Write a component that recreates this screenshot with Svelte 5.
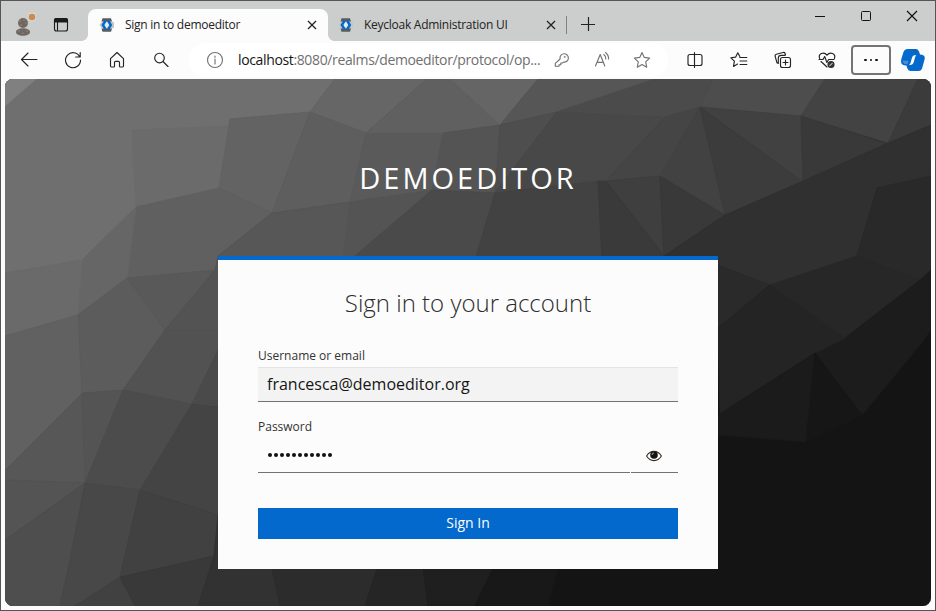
<script>
  const facets = [
    ['5,79 931,79 931,606 5,606', '#141414'],
    ['5,79 335,79 310,112 230,119 219,188 218,256 82,290 5,290', '#6f6f6f'],
    ['5,79 36,79 5,106', '#808080'],
    ['132,130 228,126 219,188 136,207', '#6b6b6b'],
    ['230,119 310,112 272,213 219,188', '#636363'],
    ['335,79 427,79 366,133 310,112', '#666666'],
    ['427,79 450,79 500,125 443,133 366,133', '#606060'],
    ['450,79 538,79 500,125', '#656565'],
    ['538,79 660,79 557,112 500,125', '#565656'],
    ['310,112 366,133 350,202 272,213', '#5e5e5e'],
    ['366,133 443,133 437,190 350,202', '#5a5a5a'],
    ['443,133 500,125 495,193 432,190', '#545454'],
    ['500,125 557,112 495,193', '#4e4e4e'],
    ['136,207 219,188 272,213 218,256 215,270 127,278', '#606060'],
    ['136,207 127,278 78,315 82,260', '#666666'],
    ['5,273 82,260 78,315 5,336', '#6a6a6a'],
    ['272,213 350,202 345,260 218,260 218,256', '#575757'],
    ['350,202 432,190 353,260 343,260', '#545454'],
    ['432,190 495,193 475,260 350,260', '#4a4a4a'],
    ['557,112 665,117 606,181 495,193', '#484848'],
    ['655,79 713,79 700,107 665,117 557,112', '#4b4b4b'],
    ['495,193 598,181 602,260 475,260', '#424242'],
    ['665,117 700,107 660,176 606,181', '#454545'],
    ['606,181 660,176 664,256', '#3f3f3f'],
    ['598,181 606,181 664,256 664,260 602,260', '#3a3a3a'],
    ['700,107 725,215 660,176', '#424242'],
    ['713,79 825,79 801,116 700,107', '#4d4d4d'],
    ['700,107 801,116 803,182', '#414141'],
    ['700,107 803,182 725,215', '#3c3c3c'],
    ['825,79 918,79 888,143 801,116', '#434343'],
    ['918,79 931,79 931,125 888,143', '#3b3b3b'],
    ['801,116 888,144 803,182', '#393939'],
    ['660,176 725,215 664,256', '#393939'],
    ['664,256 725,215 803,181 888,143 931,125 931,176 877,188 857,256 770,285 718,270', '#303030'],
    ['877,188 931,176 931,275 920,280 857,256', '#292929'],
    ['718,265 770,285 718,328', '#2a2a2a'],
    ['770,285 857,256 920,280 845,338 815,353 718,328', '#272727'],
    ['920,280 931,270 931,330 920,345 862,415 815,353 845,338', '#1c1c1c'],
    ['718,328 770,285 845,338 815,353 720,415', '#242424'],
    ['718,415 815,353 806,442 718,435', '#1b1b1b'],
    ['815,353 862,415 806,442', '#161616'],
    ['5,336 78,315 82,393 5,470', '#616161'],
    ['78,315 127,278 165,330 123,390 82,393', '#5c5c5c'],
    ['127,278 215,270 165,330', '#595959'],
    ['215,270 218,256 218,335 165,330', '#535353'],
    ['5,470 82,393 85,483 5,480', '#575757'],
    ['82,393 123,390 85,483', '#545454'],
    ['5,480 85,483 5,540', '#545454'],
    ['123,390 165,330 218,330 218,350 192,404', '#525252'],
    ['123,390 192,404 140,490 85,483', '#4c4c4c'],
    ['5,540 85,483 70,560 60,606 5,606', '#4e4e4e'],
    ['85,483 140,490 120,577 75,606 60,606 70,560', '#484848'],
    ['192,404 218,350 218,407', '#4a4a4a'],
    ['192,404 218,407 218,515 140,490', '#444444'],
    ['140,490 218,515 214,556 120,577', '#414141'],
    ['120,577 135,606 75,606', '#414141'],
    ['120,577 214,556 198,606 135,606', '#393939'],
    ['218,515 275,560 280,606 198,606 214,556', '#323232'],
    ['270,560 380,560 365,606 280,606', '#2c2c2c'],
    ['380,560 422,560 428,606 365,606', '#252525'],
    ['422,560 497,560 475,606 428,606', '#1f1f1f'],
    ['497,560 560,560 548,606 475,606', '#181818']
  ];

  const tabs = [
    { title: 'Sign in to demoeditor', active: true },
    { title: 'Keycloak Administration UI', active: false }
  ];
  let username = $state('francesca@demoeditor.org');
  let password = $state('demoeditor1');
  let visible = $state(false);
</script>

{#snippet cloakIcon()}
  <svg class="fav" width="16" height="16" viewBox="0 0 16 16">
    <path d="M3 4.500h10.500l1.500 1v5l-1.500 1H3L.5 8z" fill="#c3c6c8" />
    <path d="M3.500 1.200h8.500l1 3.300H2.500zM2.500 11.500H13l-1 3.300H3.500z" fill="#5b5b5b" />
    <path d="M6.600 3.800 4 8l2.600 4.200M9.100 3.800 11.700 8l-2.600 4.200" fill="none" stroke="#0469cd" stroke-width="2.600" />
    <path d="M7.200 5.200h1.300L10.200 8l-1.700 2.800H7.200L5.500 8z" fill="#dfeaf4" />
  </svg>
{/snippet}

<div class="window">
  <header class="strip">
    <svg class="profile" width="24" height="26" viewBox="0 0 24 26">
      <circle cx="10" cy="10" r="5" fill="#6d6864" />
      <path d="M3 19c0-5 14-5 14 0s-14 5-14 0z" fill="#6d6864" />
      <path d="M7 8h.01M11 7h.01M13 10h.01M8 12h.01M6 18h.01M10 20h.01M14 18h.01" stroke="#c98b55" stroke-width="1.2" stroke-linecap="square" />
      <circle cx="19" cy="4" r="4.300" fill="#dcdddd" />
      <circle cx="19" cy="4" r="3.300" fill="#cb8a50" />
    </svg>
    <svg class="actions" width="16" height="16" viewBox="0 0 16 16" fill="none" stroke="#1b1b1b" stroke-width="1.1">
      <rect x="1.500" y="1.500" width="13" height="12.500" rx="2" />
      <path d="M1.500 3.300q0-1.800 1.800-1.800h9.400q1.800 0 1.800 1.800V5h-13z" fill="#1b1b1b" />
      <path d="M4.500 5v9" />
    </svg>
    {#each tabs as tab}
      <div class="tab" class:active={tab.active}>
        {@render cloakIcon()}
        <span class="title">{tab.title}</span>
        <svg class="close" width="10" height="10" viewBox="0 0 10 10" stroke="#222" stroke-width="1.300"><path d="m1 1 8 8M9 1 1 9" /></svg>
      </div>
    {/each}
    <span class="divider"></span>
    <svg class="plus" width="16" height="16" viewBox="0 0 16 16" stroke="#222" stroke-width="1.200"><path d="M1 8.500h14M8.500 1v14" /></svg>
    <div class="controls">
      <svg width="12" height="12" viewBox="0 0 12 12" stroke="#111"><path d="M1 6.500h10" /></svg>
      <svg width="12" height="12" viewBox="0 0 12 12" stroke="#111" fill="none"><rect x="1.500" y="1.500" width="9" height="9" rx="1" /></svg>
      <svg width="12" height="12" viewBox="0 0 12 12" stroke="#111" stroke-width="1.200"><path d="m1 1 10 10M11 1 1 11" /></svg>
    </div>
  </header>

  <nav class="toolbar">
    <div class="nav">
      <svg viewBox="0 0 20 20"><path d="M18 9.500H2.500M9 3 2.500 9.500 9 16" /></svg>
      <svg viewBox="0 0 20 20"><path d="M16.800 7A7.500 7.500 0 1 0 17.500 10M17.200 2.500V7h-4.500" /></svg>
      <svg viewBox="0 0 20 20"><path d="M3.500 8.700 10 2.500l6.500 6.200v7.400q0 .9-.9.9h-2.400q-.7 0-.7-.7v-3.800q0-1.100-1.100-1.100H8.600q-1.100 0-1.100 1.100v3.800q0 .7-.7.7H4.400q-.9 0-.9-.9z" /></svg>
      <svg viewBox="0 0 20 20"><circle cx="8.500" cy="8" r="4.800" /><path d="m12 11.500 5 5" /></svg>
    </div>
    <div class="address">
      <svg class="muted" viewBox="0 0 20 20"><circle cx="10" cy="10" r="7.500" /><path d="M10 9v5M10 6v1.300" /></svg>
      <span class="url"><b>localhost</b>:8080/realms/demoeditor/protocol/op...</span>
      <svg class="muted key" viewBox="0 0 20 20"><path d="M9 8.300a4.200 4.200 0 1 1 3.600 3.800L11.500 13H9.800v1.700H8v1.500H4.300v-2.800L9.100 9z" /><path d="M13.500 6.500h.8v.8h-.8z" stroke-width=".7" /></svg>
      <svg class="muted read" viewBox="0 0 20 20"><path d="m3.500 16 4.700-11.500L12.800 16M5 12.300h6.300M11.800 4.500a5 5 0 0 1 2 4.500M13.500 2.500A8 8 0 0 1 16.600 9" /></svg>
      <svg class="muted star" viewBox="0 0 20 20"><path d="m10 2.500 2.300 4.900 5.300.7-3.900 3.700 1 5.400-4.700-2.700-4.700 2.700 1-5.400-3.900-3.700 5.300-.7z" /></svg>
    </div>
    <div class="tools">
      <svg viewBox="0 0 20 20"><path d="M7.500 4.500H5q-2 0-2 2v7q0 2 2 2h2.500M12.500 4.500H15q2 0 2 2v7q0 2-2 2h-2.500M9.500 2.500v15M7.500 4.500h5M7.500 15.500h5" /></svg>
      <svg viewBox="0 0 20 20"><path d="M10.800 6.600 8.800 2.800 6.700 7.100l-4.800.7 3.500 3.400-.9 5.200 4-2.300M10.800 7.500h7M11 11h6.800M11 14.500h6.800" /></svg>
      <svg viewBox="0 0 20 20"><rect x="7.500" y="7.500" width="10" height="10" rx="2" /><path d="M12.500 10v5M10 12.500h5M5.300 13.500 4 12.800 2.200 6.500q-.5-1.700 1.200-2.200L10 2.500q1.600-.4 2.100 1l.4 1.200M5.300 13.500V8.200q0-2.900 2.900-2.900h4" /></svg>
      <svg viewBox="0 0 20 20"><path d="M2.700 8.500C.7 3.800 6.800 1 10 5.200 13.200 1 19.200 3.800 17.400 8.500M2 9.500h4l1.700-3 2.200 6 1.700-3H17M4 11.500l6 5.500" /><circle cx="14" cy="14.500" r="3" fill="#333" stroke="#333" /><path d="m12.800 15.700 2.400-2.400" stroke="#bbb" /></svg>
    </div>
    <button class="more" aria-label="Settings and more"><i></i><i></i><i></i></button>
    <svg class="copilot" width="24" height="24" viewBox="0 0 24 24">
      <path d="M7 1h8q2.300 0 3 2.500l1 3q4.800.3 4.800 3.200 0 1.300-.6 3l-2 7.200q-.8 3-3.700 3h-8q-2.400 0-3.100-2.400l-1-3Q0 17.300 0 13.500q0-1.500.6-3.400l1.900-6Q3.500 1 7 1z" fill="#0469cd" />
      <path d="M13.200 7.300h2.300q-1 .5-1.400 2l-1.300 4.800q-.9 3-3.700 3H7.800q1.300-.5 1.700-2l1.300-4.800q.8-3 2.400-3z" fill="#fff" />
      <path d="m12.500 3 2-1.500 1.500 2z" fill="#315377" />
      <path d="M1 12.800h6.500l-1 3.200H3.500z" fill="#4b8fcb" />
    </svg>
  </nav>

  <main class="page">
    <svg class="backdrop" viewBox="5 79 926 527" preserveAspectRatio="none">
      {#each facets as [points, fill]}
        <polygon {points} {fill} stroke={fill} stroke-width=".8" stroke-linejoin="round" />
      {/each}
    </svg>
    <h1>DEMOEDITOR</h1>
    <section class="card">
      <h2>Sign in to your account</h2>
      <label for="username">Username or email</label>
      <input id="username" class="user" type="text" bind:value={username} spellcheck="false" />
      <label for="password" class="second">Password</label>
      <div class="secret">
        {#if visible}
          <input id="password" type="text" bind:value={password} />
        {:else}
          <div class="dots" id="password" role="textbox" aria-label="Password">
            {#each password as _}<i></i>{/each}
          </div>
        {/if}
        <button class="eye" aria-label="Show password" onclick={() => (visible = !visible)}>
          <svg width="16" height="12" viewBox="0 0 16 12"><path d="M.6 6Q3.500 1.200 8 1.200T15.400 6Q12.500 10.600 8 10.600T.6 6z" fill="none" stroke="#33251c" stroke-width="1.100" /><circle cx="8" cy="5" r="3.800" fill="#141414" /><path d="M6 5q0-2 2-2" fill="none" stroke="#b9cbdc" stroke-width=".8" /></svg>
        </button>
      </div>
      <button class="submit">Sign In</button>
    </section>
  </main>
</div>

<style>
  :global(body) { margin: 0; }
  .window { box-sizing: border-box; width: 936px; height: 611px; border: 1px solid #555; background: #fcfcfc; display: flex; flex-direction: column; overflow: hidden; font-family: "Open Sans", "Noto Sans", sans-serif; }
  svg { display: block; flex: none; }
  button { padding: 0; margin: 0; border: 0; background: none; font: inherit; }
  .strip { height: 40px; flex: none; display: flex; align-items: flex-start; background: #cccecd; }
  .profile { margin: 12px 0 0 12px; }
  .actions { margin: 16px 0 0 16px; }
  .tab { box-sizing: border-box; display: flex; align-items: center; height: 32px; margin-top: 8px; width: 238px; padding: 0 10px 0 10px; }
  .tab.active { position: relative; width: 240px; margin-left: 19px; padding: 0 11px 0 11px; background: #fcfcfc; border-radius: 8px 8px 0 0; }
  .tab.active::before, .tab.active::after { content: ""; position: absolute; bottom: 0; width: 6px; height: 6px; }
  .tab.active::before { left: -6px; background: radial-gradient(circle at 0 0, transparent 5.500px, #fcfcfc 6px); }
  .tab.active::after { right: -6px; background: radial-gradient(circle at 100% 0, transparent 5.500px, #fcfcfc 6px); }
  .title { margin-left: 10px; flex: 1; font-size: 12px; line-height: 16px; color: #222; white-space: nowrap; letter-spacing: -.26px; }
  .divider { width: 1px; height: 18px; margin-top: 15px; background: #808282; }
  .plus { margin: 15px 0 0 13px; }
  .controls { margin: 9px 17px 0 auto; display: flex; gap: 34px; }
  .toolbar { height: 38px; flex: none; display: flex; align-items: center; }
  .toolbar svg:not(.copilot) { width: 20px; height: 20px; fill: none; stroke: #242424; stroke-width: 1.150; stroke-linejoin: round; stroke-linecap: round; }
  .nav { display: flex; gap: 24px; margin-left: 18px; }
  .address { box-sizing: border-box; width: 479px; height: 34px; margin-left: 18px; padding-left: 16px; display: flex; align-items: center; border-radius: 17px; background: #fff; }
  .toolbar .address svg.muted { stroke: #737373; }
  .url { width: 303px; margin-left: 13px; font-size: 14px; line-height: 20px; color: #6f6f6f; white-space: nowrap; letter-spacing: -.36px; }
  .url b { font-weight: 400; color: #151515; }
  .toolbar .key { margin-left: 10px; }
  .read { margin-left: 21px; }
  .star { margin-left: 20px; }
  .tools { display: flex; gap: 24px; margin-left: 17px; }
  .more { box-sizing: border-box; width: 40px; height: 30px; margin-left: 14px; border: 2px solid #747474; border-radius: 4px; display: flex; align-items: center; justify-content: center; gap: 3px; }
  .more i { width: 2.500px; height: 2.500px; border-radius: 50%; background: #111; }
  .copilot { margin-left: 10px; }
  .page { position: relative; width: 926px; height: 527px; margin-left: 4px; border-radius: 8px; overflow: hidden; flex: none; display: flex; flex-direction: column; align-items: center; }
  .backdrop { position: absolute; inset: 0; width: 100%; height: 100%; }
  h1 { position: relative; margin: 79px 0 0; height: 40px; line-height: 40px; font-size: 29px; font-weight: 400; letter-spacing: 3px; color: #fff; }
  .card { position: relative; box-sizing: border-box; width: 500px; height: 313px; margin-top: 58px; padding: 27px 40px 0; border-top: 4px solid #0469cd; background: #fcfcfc; display: flex; flex-direction: column; }
  h2 { margin: 0; height: 32px; line-height: 32px; font-size: 24px; font-weight: 300; text-align: center; color: #2c2c2c; }
  label { margin-top: 27px; height: 20px; line-height: 20px; font-size: 12px; color: #333; }
  input { box-sizing: border-box; border: 0; border-bottom: 1px solid #727272; border-radius: 0; outline: 0; background: transparent; padding: 0 9px; height: 36px; flex: 1; font: 16px "Open Sans", sans-serif; color: #151515; }
  .user { flex: none; width: 420px; height: 35px; margin-top: 1px; padding-bottom: 2px; background: #f3f3f3; border-top: 1px solid #e4e4e4; }
  label.second { margin-top: 15px; }
  .secret { display: flex; height: 36px; gap: 1px; }
  .dots { box-sizing: border-box; flex: 1; border-bottom: 1px solid #727272; display: flex; align-items: center; gap: 2px; padding: 0 0 0 10px; }
  .dots i { width: 4px; height: 4px; border-radius: 50%; background: #111; }
  .eye { box-sizing: border-box; width: 47px; padding: 2px 1px 0 0; border-bottom: 1px solid #727272; display: flex; align-items: center; justify-content: center; }
  .submit { margin-top: 35px; height: 31px; padding-bottom: 2px; background: #0469cd; color: #fff; font-size: 14px; line-height: 29px; }
</style>
